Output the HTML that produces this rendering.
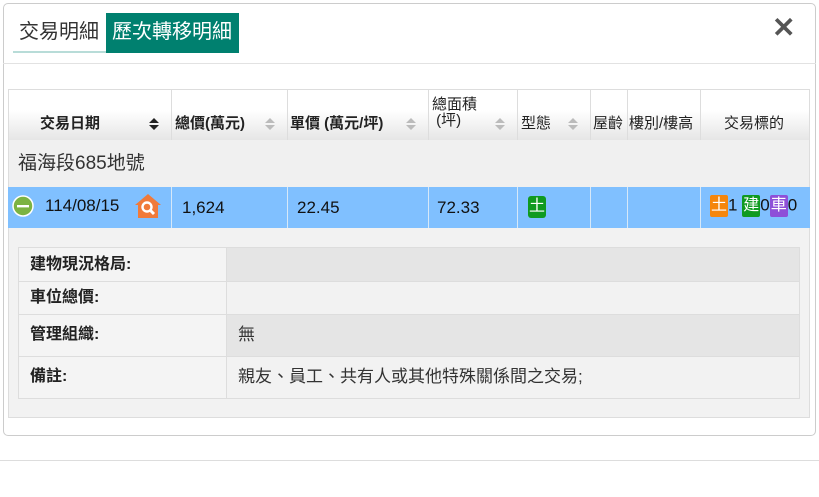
<!DOCTYPE html>
<html><head><meta charset="utf-8"><style>
*{margin:0;padding:0;box-sizing:border-box}
body{width:819px;height:497px;background:#fff;font-family:"Liberation Sans","Noto Sans CJK TC",sans-serif;position:relative;overflow:hidden;color:#222}
.abs{position:absolute}
.modal{left:3px;top:3px;width:813px;height:433px;border:1px solid #ccc;border-radius:5px;background:#fff}
.t{font-size:15px;font-weight:bold;color:#222;line-height:18px}
.vl{position:absolute;top:0;bottom:0;width:1px;background:#ddd}
.cell{position:absolute;font-size:17px;color:#111;line-height:20px}
.badge{display:inline-block;color:#fff;font-size:16px;line-height:21px;height:22px;padding:0 1px;border-radius:2px;vertical-align:middle}
</style></head><body>
<div class="abs" style="left:0;top:460px;width:819px;height:1px;background:#ddd"></div>
<div class="abs modal"></div>
<div class="abs" style="left:3px;top:63px;width:813px;height:1px;background:#e2e2e2"></div>
<div class="abs" style="left:19px;top:20px;font-size:20px;line-height:24px;color:#333">交易明細</div>
<div class="abs" style="left:13px;top:51px;width:93px;height:2px;background:#b8dcd8"></div>
<div class="abs" style="left:106px;top:13px;width:133px;height:40px;background:#00806f;color:#fff;font-size:20px;line-height:24px;padding:7px 0 0 6px">歷次轉移明細</div>
<div class="abs" style="left:772px;top:13px;font-size:28px;font-weight:bold;color:#555;line-height:30px">✕</div>

<div class="abs" style="left:8px;top:89px;width:802px;height:51px;background:linear-gradient(#fff,#fff 40%,#e6e6e6);border:1px solid #ddd;border-bottom:none">
 <div class="vl" style="left:162px"></div><div class="vl" style="left:278px"></div><div class="vl" style="left:419px"></div><div class="vl" style="left:508px"></div><div class="vl" style="left:581px"></div><div class="vl" style="left:618px"></div><div class="vl" style="left:691px"></div>
 <div class="abs t" style="left:31px;top:25px">交易日期</div>
 <svg class="abs" style="left:140px;top:27px" width="10" height="14"><path d="M0 6L5 1L10 6Z M0 8L5 13L10 8Z" fill="#222"/></svg>
 <div class="abs t" style="left:166px;top:25px">總價(萬元)</div>
 <svg class="abs" style="left:256px;top:27px" width="10" height="14"><path d="M0 6L5 1L10 6Z M0 8L5 13L10 8Z" fill="#bbb"/></svg>
 <div class="abs t" style="left:281px;top:25px">單價 (萬元/坪)</div>
 <svg class="abs" style="left:397px;top:27px" width="10" height="14"><path d="M0 6L5 1L10 6Z M0 8L5 13L10 8Z" fill="#bbb"/></svg>
 <div class="abs t" style="left:423px;top:7px;font-weight:normal;line-height:16px">總面積<br>&nbsp;(坪)</div>
 <svg class="abs" style="left:486px;top:27px" width="10" height="14"><path d="M0 6L5 1L10 6Z M0 8L5 13L10 8Z" fill="#bbb"/></svg>
 <div class="abs t" style="left:512px;top:25px;font-weight:normal">型態</div>
 <svg class="abs" style="left:559px;top:27px" width="10" height="14"><path d="M0 6L5 1L10 6Z M0 8L5 13L10 8Z" fill="#bbb"/></svg>
 <div class="abs t" style="left:584px;top:25px;font-weight:normal">屋齡</div>
 <div class="abs t" style="left:620px;top:25px;font-weight:normal">樓別/樓高</div>
 <div class="abs t" style="left:715px;top:25px;font-weight:normal">交易標的</div>
</div>
<div class="abs" style="left:8px;top:140px;width:802px;height:47px;background:#f0f0f0;border-left:1px solid #ddd;border-right:1px solid #ddd"></div>
<div class="abs" style="left:18px;top:152px;font-size:19px;line-height:24px;color:#333">福海段685地號</div>
<div class="abs" style="left:8px;top:187px;width:802px;height:41px;background:#80c0ff">
 <div class="vl" style="left:163px;background:#d6e8f8"></div><div class="vl" style="left:279px;background:#d6e8f8"></div><div class="vl" style="left:420px;background:#d6e8f8"></div><div class="vl" style="left:509px;background:#d6e8f8"></div><div class="vl" style="left:582px;background:#d6e8f8"></div><div class="vl" style="left:619px;background:#d6e8f8"></div><div class="vl" style="left:692px;background:#d6e8f8"></div>
 <svg class="abs" style="left:4px;top:8px" width="22" height="22"><circle cx="11" cy="11" r="10" fill="#7cb342" stroke="#fff" stroke-width="1.5"/><rect x="5" y="10" width="12" height="2.4" fill="#fff"/></svg>
 <div class="cell" style="left:37px;top:9px">114/08/15</div>
 <svg class="abs" style="left:126px;top:6px" width="28" height="26"><path d="M14 1L1 12H4V25H24V12H27Z" fill="#f07a3a"/><circle cx="13" cy="14" r="4.5" fill="none" stroke="#fff" stroke-width="2.4"/><path d="M16 17L20 21" stroke="#fff" stroke-width="3"/></svg>
 <div class="cell" style="left:174px;top:11px">1,624</div>
 <div class="cell" style="left:289px;top:11px">22.45</div>
 <div class="cell" style="left:429px;top:11px">72.33</div>
 <span class="badge abs" style="left:520px;top:9px;background:#109a20;border-radius:3px">土</span>
 <div class="abs" style="left:702px;top:8px;font-size:17px;color:#111"><span class="badge" style="background:#f5860c">土</span>1 <span class="badge" style="background:#109a20">建</span>0<span class="badge" style="background:#8e4fd8">車</span>0</div>
</div>
<div class="abs" style="left:8px;top:228px;width:802px;height:190px;background:#f2f2f2;border:1px solid #ddd;border-top:none"></div>
<div class="abs" style="left:18px;top:247px;width:782px;height:152px;border:1px solid #ddd">
 <div class="abs" style="left:0;top:0;width:208px;height:150px;background:#f4f4f4;border-right:1px solid #ddd"></div>
 <div class="abs" style="left:208px;top:0;width:572px;height:33px;background:#e5e5e5"></div>
 <div class="abs" style="left:208px;top:34px;width:572px;height:32px;background:#f2f2f2"></div>
 <div class="abs" style="left:208px;top:67px;width:572px;height:41px;background:#e5e5e5"></div>
 <div class="abs" style="left:208px;top:109px;width:572px;height:41px;background:#f2f2f2"></div>
 <div class="abs" style="left:0;top:33px;width:780px;height:1px;background:#ddd"></div>
 <div class="abs" style="left:0;top:66px;width:780px;height:1px;background:#ddd"></div>
 <div class="abs" style="left:0;top:108px;width:780px;height:1px;background:#ddd"></div>
 <div class="abs t" style="left:11px;top:7px;font-size:16px;line-height:20px">建物現況格局:</div>
 <div class="abs t" style="left:11px;top:40px;font-size:16px;line-height:20px">車位總價:</div>
 <div class="abs t" style="left:11px;top:77px;font-size:16px;line-height:20px">管理組織:</div>
 <div class="abs t" style="left:11px;top:119px;font-size:16px;line-height:20px">備註:</div>
 <div class="abs" style="left:219px;top:76px;font-size:17px;line-height:22px;color:#333">無</div>
 <div class="abs" style="left:219px;top:118px;font-size:17px;line-height:22px;color:#333">親友、員工、共有人或其他特殊關係間之交易;</div>
</div>
</body></html>
